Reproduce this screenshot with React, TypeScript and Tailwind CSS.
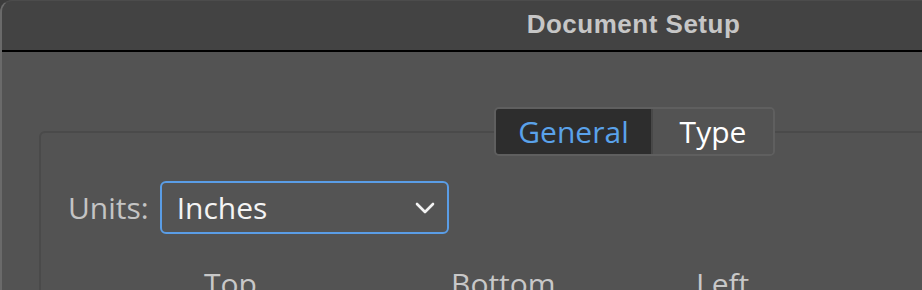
import React from "react";

export default function App() {
  const sans = { fontFamily: '"Open Sans", "Noto Sans", sans-serif' };
  return (
    <div className="w-[922px] h-[290px] overflow-hidden bg-[#3c3c3c]">
      <div className="w-[1267px] h-[290px] rounded-tl-[12px] border-l-2 border-t border-l-[#6a6a6a] border-t-[#4c4c4c] bg-[#535353] overflow-hidden flex flex-col">
        <div className="h-[51px] shrink-0 bg-[#434343] border-b-2 border-black flex items-start justify-center pt-[8px] pr-[2px]">
          <span
            className="text-[26px] font-bold text-[#c6c6c6] tracking-[0.5px] leading-[30px]"
            style={{ fontFamily: '"Liberation Sans", Arial, sans-serif' }}
          >
            Document Setup
          </span>
        </div>
        <div className="flex-1 pt-[79px] pl-[37px] pr-[37px]" style={sans}>
          <div className="relative h-[400px] rounded-[6px] border-2 border-[#4a4a4a]">
            <div className="absolute left-0 right-0 -top-[26px] flex justify-center">
              <div className="flex h-[49px] rounded-[5px] border-2 border-[#5f5f5f] overflow-hidden">
                <div className="w-[157px] bg-[#2d2d2d] flex items-center justify-center text-[30px] leading-[40px] text-[#5aa2ea] border-r-2 border-[#484848]">
                  General
                </div>
                <div className="w-[120px] bg-[#535353] flex items-center justify-center text-[30px] leading-[40px] text-white">
                  Type
                </div>
              </div>
            </div>
            <div className="pt-[48px] pl-[27px] flex items-center gap-[11px]">
              <span className="text-[30px] leading-[40px] text-[#c4c4c4]">Units:</span>
              <div className="w-[289px] h-[53px] rounded-[6px] border-2 border-[#5a9de6] bg-[#545454] flex items-center justify-between pl-[15px] pr-[12px]">
                <span className="text-[30px] leading-[40px] text-[#f4f4f4]">Inches</span>
                <svg width="20" height="12" viewBox="0 0 20 12" fill="none">
                  <path d="M2 2 L10 10 L18 2" stroke="#f2f2f2" strokeWidth="2.6" strokeLinecap="round" strokeLinejoin="round" />
                </svg>
              </div>
            </div>
            <div className="mt-[30px] pl-[163px] flex text-[30px] leading-[40px] text-[#c8c8c8]">
              <span className="w-[247px]">Top</span>
              <span className="w-[245px]">Bottom</span>
              <span className="w-[200px]">Left</span>
            </div>
          </div>
        </div>
      </div>
    </div>
  );
}
